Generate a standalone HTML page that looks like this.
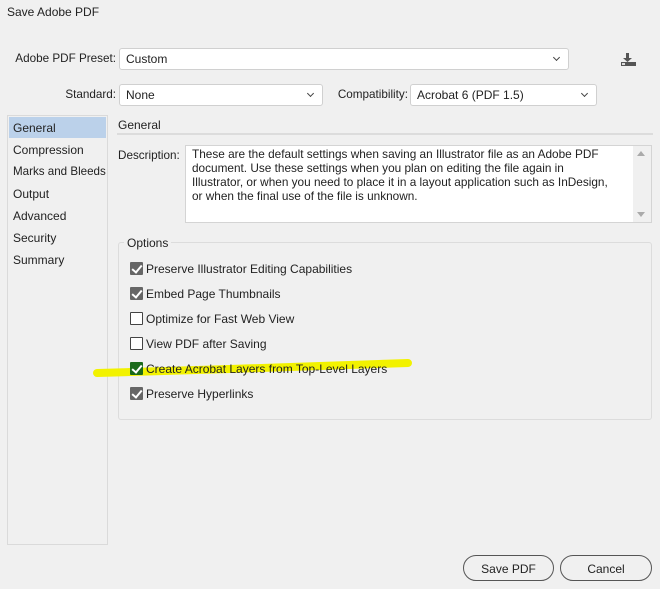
<!DOCTYPE html>
<html><head><style>
*{box-sizing:border-box;margin:0;padding:0}
body{width:660px;height:589px;background:#f0f0f0;font-family:"Liberation Sans",sans-serif;font-size:12px;color:#222;position:relative;overflow:hidden}
.a{position:absolute;white-space:nowrap}
.r{position:absolute;white-space:nowrap;text-align:right}
.sel{position:absolute;background:#fff;border:1px solid #d0d0d0;border-radius:3px;height:22px;padding:3px 0 0 6px}
.sel:after{content:"";position:absolute;right:9px;top:6px;width:4px;height:4px;border-right:1.3px solid #444;border-bottom:1.3px solid #444;transform:rotate(45deg)}
.cb{position:absolute;left:130px;width:13px;height:13px;border:1px solid #444;background:#fff;border-radius:1px}
.cb.on{background:#666;border-color:#666}
.cb.on:after{content:"";position:absolute;left:3px;top:0px;width:4px;height:8px;border-right:2px solid #fff;border-bottom:2px solid #fff;transform:rotate(40deg)}
.lb{position:absolute;left:146px;white-space:nowrap}
.btn{position:absolute;top:555px;height:26px;border:1.5px solid #555;border-radius:13px;text-align:center;padding-top:6px;font-size:12px}
</style></head><body>
<div class="a" style="left:7px;top:5px">Save Adobe PDF</div>
<div class="r" style="right:544px;top:52px;font-size:11.7px">Adobe PDF Preset:</div>
<div class="sel" style="left:119px;top:48px;width:450px">Custom</div>
<svg class="a" style="left:620px;top:53px" width="16" height="14"><rect x="6" y="0" width="3" height="6" fill="#555"/><path d="M3 5h9l-4.5 4z" fill="#555"/><rect x="1" y="9" width="15" height="4" fill="#555"/><rect x="2" y="10" width="3" height="2" fill="#ddd"/></svg>
<div class="r" style="right:544px;top:88px;font-size:11.7px">Standard:</div>
<div class="sel" style="left:119px;top:84px;width:204px">None</div>
<div class="r" style="right:252px;top:88px;font-size:11.7px">Compatibility:</div>
<div class="sel" style="left:410px;top:84px;width:187px">Acrobat 6 (PDF 1.5)</div>
<div class="a" style="left:7px;top:115px;width:101px;height:430px;border:1px solid #dadada"></div>
<div class="a" style="left:9px;top:117px;width:97px;height:21px;background:#bbd1ea"></div>
<div class="a" style="left:13px;top:121px">General</div>
<div class="a" style="left:13px;top:143px">Compression</div>
<div class="a" style="left:13px;top:165px;font-size:11.6px">Marks and Bleeds</div>
<div class="a" style="left:13px;top:187px">Output</div>
<div class="a" style="left:13px;top:209px">Advanced</div>
<div class="a" style="left:13px;top:231px">Security</div>
<div class="a" style="left:13px;top:253px">Summary</div>
<div class="a" style="left:118px;top:118px">General</div>
<div class="a" style="left:117px;top:133px;width:536px;height:2px;background:#dcdcdc"></div>
<div class="a" style="left:118px;top:149px;font-size:11.7px">Description:</div>
<div class="a" style="left:185px;top:145px;width:467px;height:78px;background:#fff;border:1px solid #d4d4d4"></div>
<div class="a" style="left:192px;top:147px;line-height:14px;font-size:11.8px">These are the default settings when saving an Illustrator file as an Adobe PDF<br>document. Use these settings when you plan on editing the file again in<br>Illustrator, or when you need to place it in a layout application such as InDesign,<br>or when the final use of the file is unknown.</div>
<div class="a" style="left:633px;top:146px;width:18px;height:76px;background:#f0f0f0"></div>
<div class="a" style="left:637px;top:151px;border:4px solid transparent;border-bottom:5px solid #aaa;border-top:0"></div>
<div class="a" style="left:637px;top:212px;border:4px solid transparent;border-top:5px solid #aaa;border-bottom:0"></div>
<div class="a" style="left:118px;top:242px;width:534px;height:178px;border:1px solid #dcdcdc;border-radius:3px"></div>
<div class="a" style="left:124px;top:236px;background:#f0f0f0;padding:0 3px">Options</div>
<svg class="a" style="left:0;top:0" width="660" height="589"><path d="M97 373 L230 369 L408 363" stroke="#f2f200" stroke-width="8" fill="none" stroke-linecap="round"/></svg>
<div class="cb on" style="top:262px"></div><div class="lb" style="top:262px">Preserve Illustrator Editing Capabilities</div>
<div class="cb on" style="top:287px"></div><div class="lb" style="top:287px">Embed Page Thumbnails</div>
<div class="cb" style="top:312px"></div><div class="lb" style="top:312px">Optimize for Fast Web View</div>
<div class="cb" style="top:337px"></div><div class="lb" style="top:337px">View PDF after Saving</div>
<div class="cb on" style="top:362px;background:#1a6a1a;border-color:#1a6a1a"></div><div class="lb" style="top:362px">Create Acrobat Layers from Top-Level Layers</div>
<div class="cb on" style="top:387px"></div><div class="lb" style="top:387px">Preserve Hyperlinks</div>
<div class="btn" style="left:463px;width:91px">Save PDF</div>
<div class="btn" style="left:560px;width:92px;border-width:1px">Cancel</div>
</body></html>
